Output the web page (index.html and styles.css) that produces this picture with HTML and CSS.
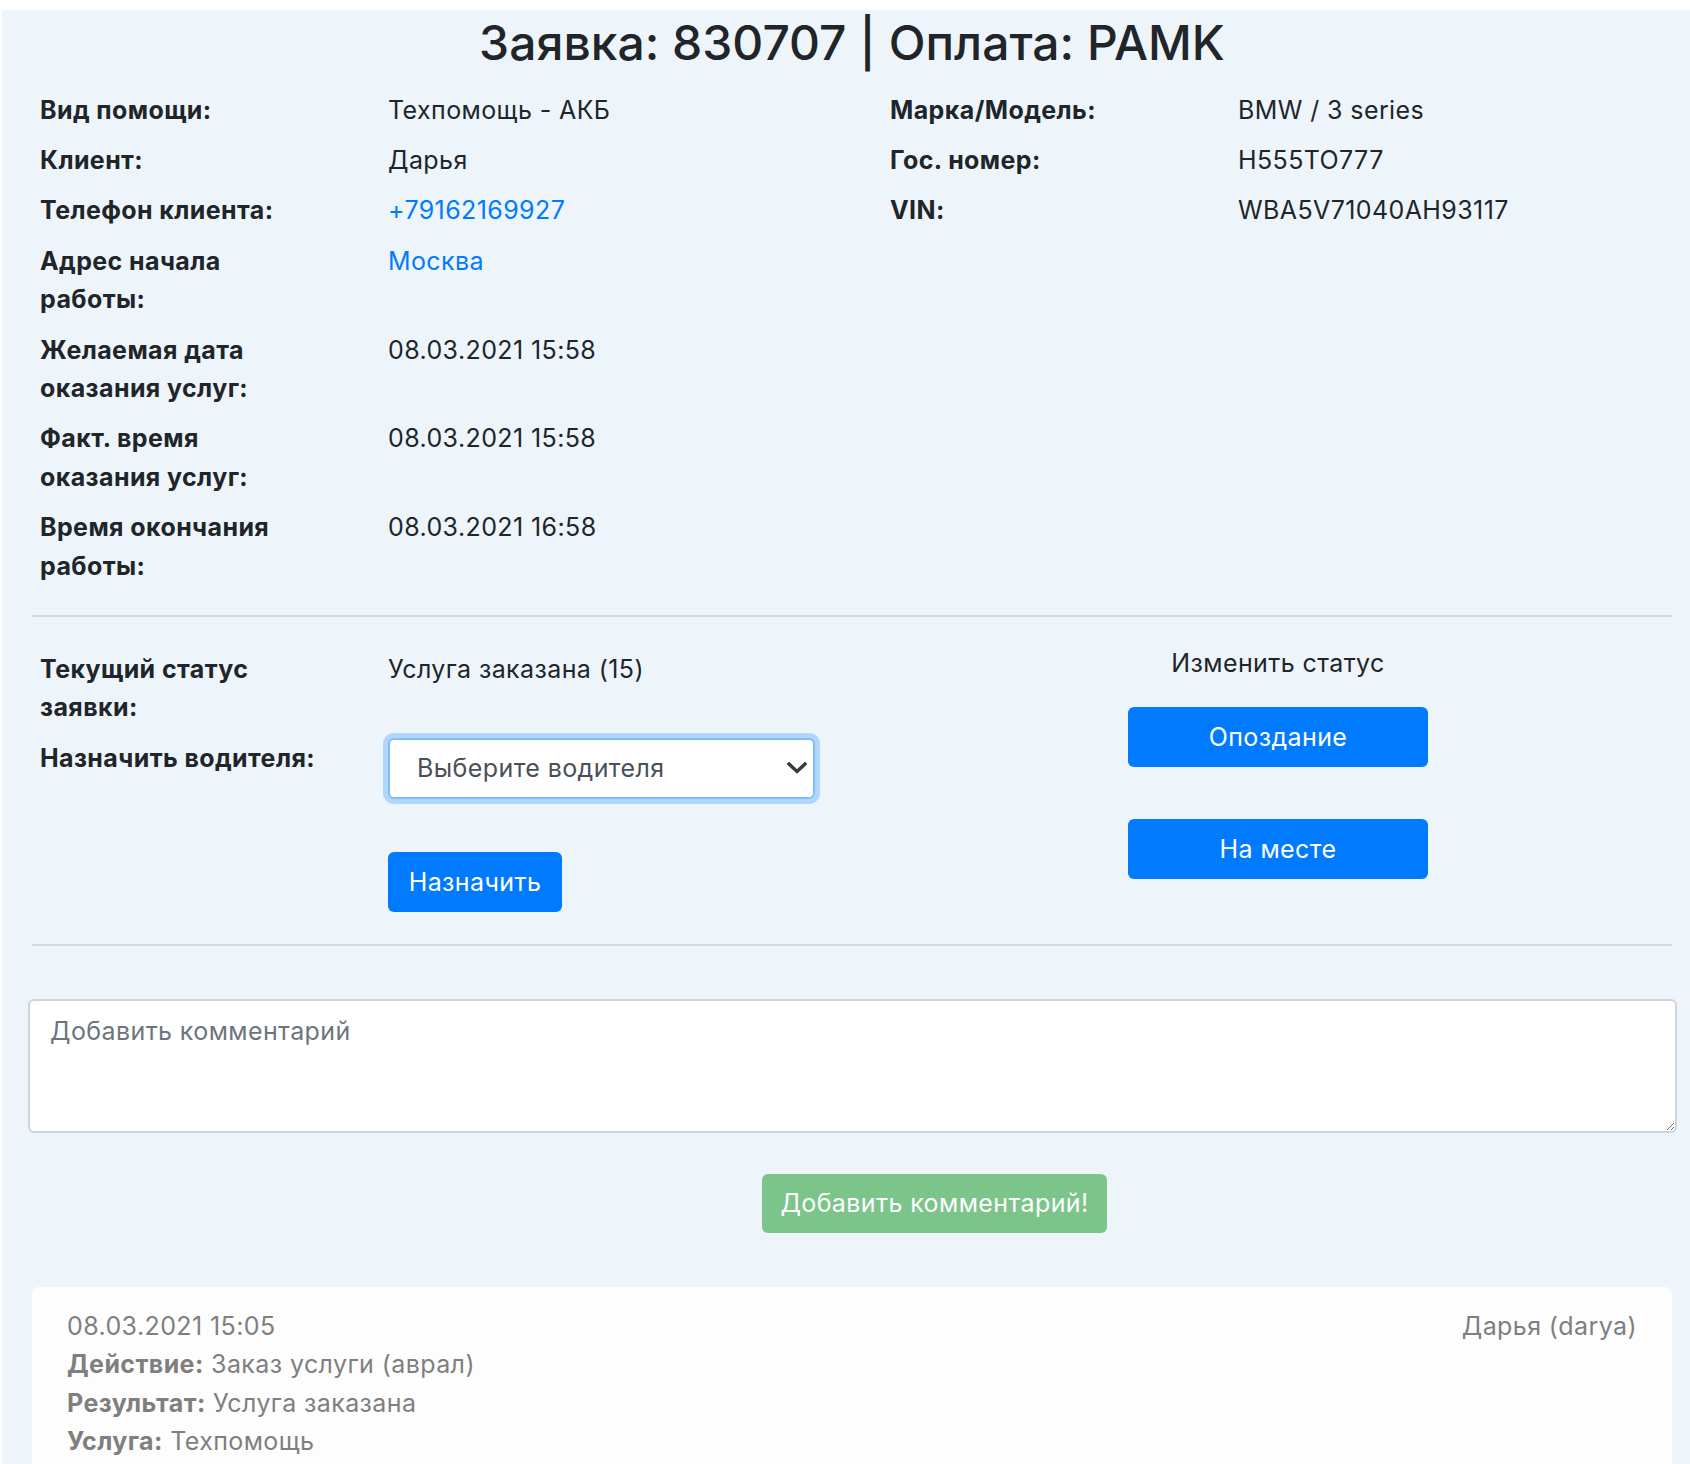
FILE: index.html
```html
<!DOCTYPE html>
<html lang="ru">
<head>
<meta charset="utf-8">
<title>Заявка 830707</title>
<link rel="stylesheet" href="styles.css">
</head>
<body>
<div class="page">
  <h1 class="title">Заявка: 830707 | Оплата: PAMK</h1>

  <div class="info">
    <dl class="info-col info-col-left">
      <dt>Вид помощи:</dt><dd>Техпомощь - АКБ</dd>
      <dt>Клиент:</dt><dd>Дарья</dd>
      <dt>Телефон клиента:</dt><dd><a class="link" href="#">+79162169927</a></dd>
      <dt>Адрес начала работы:</dt><dd><a class="link" href="#">Москва</a></dd>
      <dt>Желаемая дата оказания услуг:</dt><dd>08.03.2021 15:58</dd>
      <dt>Факт. время оказания услуг:</dt><dd>08.03.2021 15:58</dd>
      <dt>Время окончания работы:</dt><dd>08.03.2021 16:58</dd>
    </dl>
    <dl class="info-col info-col-right">
      <dt>Марка/Модель:</dt><dd>BMW / 3 series</dd>
      <dt>Гос. номер:</dt><dd>H555TO777</dd>
      <dt>VIN:</dt><dd>WBA5V71040AH93117</dd>
    </dl>
  </div>

  <hr class="sep sep-top">

  <div class="status">
    <div class="status-form">
      <div class="label">Текущий статус заявки:</div>
      <div class="value">Услуга заказана (15)</div>
      <div class="label">Назначить водителя:</div>
      <div class="value">
        <div class="select-wrap">
          <select class="driver-select">
            <option>Выберите водителя</option>
          </select>
          <svg class="select-arrow" width="20" height="12" viewBox="0 0 20 12" aria-hidden="true">
            <path d="M2 2 L10 9.5 L18 2" fill="none" stroke="#343a40" stroke-width="3.4" stroke-linecap="square"/>
          </svg>
        </div>
        <button class="btn btn-primary btn-assign" type="button">Назначить</button>
      </div>
    </div>
    <div class="status-change">
      <div class="status-change-title">Изменить статус</div>
      <button class="btn btn-primary btn-status" type="button">Опоздание</button>
      <button class="btn btn-primary btn-status btn-status-second" type="button">На месте</button>
    </div>
  </div>

  <hr class="sep sep-bottom">

  <textarea class="comment-input" placeholder="Добавить комментарий"></textarea>

  <div class="comment-actions">
    <button class="btn btn-success-disabled" type="button">Добавить комментарий!</button>
  </div>

  <div class="history-card">
    <div class="history-main">
      <div>08.03.2021 15:05</div>
      <div><b>Действие:</b> Заказ услуги (аврал)</div>
      <div><b>Результат:</b> Услуга заказана</div>
      <div><b>Услуга:</b> Техпомощь</div>
    </div>
    <div class="history-author">Дарья (darya)</div>
  </div>
</div>
</body>
</html>
```

FILE: styles.css
```css
html, body {
  margin: 0;
  padding: 0;
  background: #ffffff;
}

body {
  font-family: "Inter", "Noto Sans", sans-serif;
  font-size: 25px;
  letter-spacing: 0.4px;
  line-height: 38.4px;
  color: #212529;
}

.page {
  margin: 10px 0 0 2px;
  padding: 0 18px 60px 30px;
  background: #edf5fb;
  min-height: 1500px;
}

.title {
  margin: 0;
  padding-top: 4px;
  font-size: 48px;
  letter-spacing: 0;
  line-height: 57.6px;
  font-weight: 500;
  text-align: center;
  color: #212529;
}

.info {
  display: flex;
  margin-top: 19px;
  padding-left: 8px;
}

.info-col {
  display: grid;
  grid-template-columns: 348px 1fr;
  row-gap: 12px;
  margin: 0;
  align-content: start;
}

.info-col-left {
  width: 850px;
}

.info-col-right {
  flex: 1;
}

.info-col dt,
.label {
  font-weight: 700;
  padding-right: 68px;
}

.info-col dd {
  margin: 0;
}

.link {
  color: #007bff;
  text-decoration: none;
}

.sep {
  border: 0;
  border-top: 2px solid #d5dce1;
  margin: 0;
}

.sep-top {
  margin-top: 30px;
}

.sep-bottom {
  margin-top: 32px;
}

.status {
  display: flex;
  padding-top: 26px;
  padding-left: 8px;
}

.status-form {
  width: 850px;
  display: grid;
  grid-template-columns: 348px 502px;
  row-gap: 12px;
  padding-top: 7px;
  align-content: start;
}

.select-wrap {
  position: relative;
  width: 427px;
  margin-top: -1px;
}

.driver-select {
  display: block;
  width: 427px;
  height: 61px;
  margin: 0;
  padding: 0 50px 0 27px;
  font-family: inherit;
  font-size: 25px;
  letter-spacing: 0.4px;
  color: #495057;
  background: #ffffff;
  border: 2px solid #80bdff;
  border-radius: 6px;
  box-shadow: 0 0 0 5px rgba(0, 123, 255, 0.25);
  appearance: none;
  -webkit-appearance: none;
  outline: none;
}

.select-arrow {
  position: absolute;
  right: 8px;
  top: 24px;
}

.btn {
  font-family: inherit;
  font-size: 25px;
  letter-spacing: 0.4px;
  line-height: 38.4px;
  border: 0;
  border-radius: 6px;
  color: #ffffff;
  cursor: pointer;
}

.btn-primary {
  background: #007bff;
}

.btn-assign {
  display: block;
  margin-top: 53px;
  height: 60px;
  width: 174px;
  padding: 0;
}

.status-change {
  flex: 1;
  display: flex;
  flex-direction: column;
  align-items: center;
  padding-top: 1px;
  padding-right: 6px;
}

.status-change-title {
  line-height: 38.4px;
}

.btn-status {
  width: 300px;
  height: 60px;
  margin-top: 25px;
  padding: 0;
}

.btn-status-second {
  margin-top: 52px;
}

.comment-input {
  display: block;
  box-sizing: border-box;
  width: calc(100% + 9px);
  height: 134px;
  margin: 53px 0 0 -4px;
  padding: 11px 20px;
  font-family: inherit;
  font-size: 25px;
  letter-spacing: 0.4px;
  line-height: 38.4px;
  color: #495057;
  background: #ffffff;
  border: 2px solid #ced4da;
  border-radius: 6px;
  outline: none;
}

.comment-input::placeholder {
  color: #6c757d;
}

.comment-actions {
  margin-top: 41px;
  padding-left: 730px;
}

.btn-success-disabled {
  width: 345px;
  height: 59px;
  padding: 0;
  background: #7bc58b;
}

.history-card {
  display: flex;
  justify-content: space-between;
  margin-top: 54px;
  padding: 20px 35px 24px 35px;
  background: #fdfdfd;
  border-radius: 6px;
  color: #7f7f7f;
}

.history-main b {
  font-weight: 700;
}
```
